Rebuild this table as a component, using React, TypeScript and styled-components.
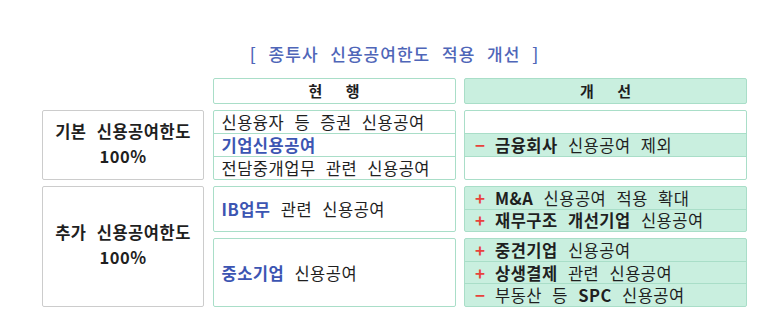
import React from "react";
import styled, { createGlobalStyle } from "styled-components";

const GlobalStyle = createGlobalStyle`
  body {
    margin: 0;
    background: #ffffff;
    font-family: "Noto Sans CJK KR", "Noto Sans", sans-serif;
    color: #1f1f1f;
  }
`;

const MINT = "#c9efdf";
const MINT_LINE = "#a9dec8";

const Page = styled.div`
  width: 705px;
  padding: 44px 0 0 42px;
`;

const Title = styled.div`
  text-align: center;
  color: #4f66b8;
  font-size: 17px;
  font-weight: 500;
  line-height: 20px;
  letter-spacing: 1px;
  word-spacing: 7px;
  margin: 0 0 14px 0;
`;

const Table = styled.div`
  display: grid;
  grid-template-columns: 162px 243px 283px;
  grid-template-rows: 26px 70px 46px 69px;
  column-gap: 8.5px;
  row-gap: 6px;
`;

const HeadCell = styled.div<{ $mint?: boolean; $col: number }>`
  grid-column: ${(p) => p.$col};
  grid-row: 1;
  display: flex;
  align-items: center;
  justify-content: center;
  border: 1px solid ${MINT_LINE};
  border-radius: 2px;
  background: ${(p) => (p.$mint ? MINT : "#ffffff")};
  font-size: 15px;
  font-weight: 700;
  line-height: 20px;
  word-spacing: 20px;
`;

const LabelBox = styled.div<{ $row: string }>`
  grid-column: 1;
  grid-row: ${(p) => p.$row};
  display: flex;
  flex-direction: column;
  align-items: center;
  justify-content: center;
  border: 1px solid #cccccc;
  border-radius: 2px;
  font-size: 16.5px;
  font-weight: 700;
  line-height: 25px;
  letter-spacing: 0.5px;
  word-spacing: 6px;
  padding-bottom: 3px;
`;

const ListBox = styled.div<{ $col: number; $row: string; $mint?: boolean }>`
  grid-column: ${(p) => p.$col};
  grid-row: ${(p) => p.$row};
  display: flex;
  flex-direction: column;
  border: 1px solid ${MINT_LINE};
  border-radius: 2px;
  background: ${(p) => (p.$mint ? MINT : "#ffffff")};
  overflow: hidden;
`;

const Row = styled.div<{ $filled?: boolean; $pad?: number }>`
  flex: 1 1 0;
  min-height: 0;
  display: flex;
  align-items: center;
  padding-left: ${(p) => p.$pad ?? 8}px;
  background: ${(p) => (p.$filled ? MINT : "transparent")};
  font-size: 16.5px;
  line-height: 20px;
  letter-spacing: 0.5px;
  word-spacing: 6px;
  white-space: nowrap;
  & + & {
    border-top: 1px solid ${MINT_LINE};
  }
`;

const Sign = styled.span`
  display: inline-block;
  width: 20px;
  color: #e8423c;
  font-weight: 700;
  font-size: 17px;
  line-height: 20px;
`;

const Strong = styled.b`
  font-weight: 700;
`;

const Blue = styled.span`
  color: #3c55b2;
  font-weight: 700;
`;

const Change = ({ sign, children }: { sign: "+" | "−"; children: React.ReactNode }) => (
  <>
    <Sign>{sign}</Sign>
    <span>{children}</span>
  </>
);

const App = () => {
  return (
    <>
      <GlobalStyle />
      <Page>
        <Title>[ 종투사 신용공여한도 적용 개선 ]</Title>
        <Table>
          <HeadCell $col={2}>현 행</HeadCell>
          <HeadCell $col={3} $mint>
            개 선
          </HeadCell>

          <LabelBox $row="2">
            <div>기본 신용공여한도</div>
            <div>100%</div>
          </LabelBox>
          <ListBox $col={2} $row="2">
            <Row>신용융자 등 증권 신용공여</Row>
            <Row>
              <Blue>기업신용공여</Blue>
            </Row>
            <Row>전담중개업무 관련 신용공여</Row>
          </ListBox>
          <ListBox $col={3} $row="2">
            <Row />
            <Row $filled $pad={10}>
              <Change sign="−">
                <Strong>금융회사</Strong> 신용공여 제외
              </Change>
            </Row>
            <Row />
          </ListBox>

          <LabelBox $row="3 / 5">
            <div>추가 신용공여한도</div>
            <div>100%</div>
          </LabelBox>
          <ListBox $col={2} $row="3">
            <Row>
              <span>
                <Blue>IB업무</Blue> 관련 신용공여
              </span>
            </Row>
          </ListBox>
          <ListBox $col={3} $row="3" $mint>
            <Row $pad={10}>
              <Change sign="+">
                <Strong>M&amp;A</Strong> 신용공여 적용 확대
              </Change>
            </Row>
            <Row $pad={10}>
              <Change sign="+">
                <Strong>재무구조 개선기업</Strong> 신용공여
              </Change>
            </Row>
          </ListBox>

          <ListBox $col={2} $row="4">
            <Row>
              <span>
                <Blue>중소기업</Blue> 신용공여
              </span>
            </Row>
          </ListBox>
          <ListBox $col={3} $row="4" $mint>
            <Row $pad={10}>
              <Change sign="+">
                <Strong>중견기업</Strong> 신용공여
              </Change>
            </Row>
            <Row $pad={10}>
              <Change sign="+">
                <Strong>상생결제</Strong> 관련 신용공여
              </Change>
            </Row>
            <Row $pad={10}>
              <Change sign="−">
                부동산 등 <Strong>SPC</Strong> 신용공여
              </Change>
            </Row>
          </ListBox>
        </Table>
      </Page>
    </>
  );
};

export default App;
